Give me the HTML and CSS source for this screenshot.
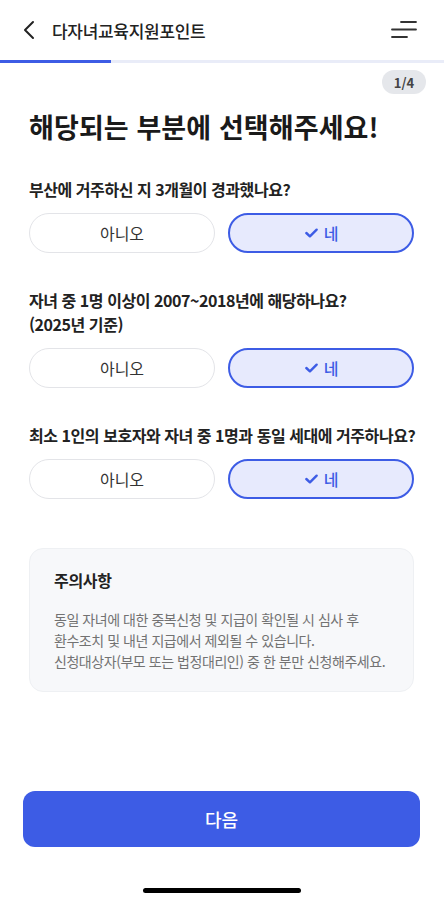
FILE: index.html
```html
<!DOCTYPE html>
<html lang="ko">
<head>
<meta charset="utf-8">
<title>다자녀교육지원포인트</title>
<link rel="stylesheet" href="styles.css">
</head>
<body>
<div class="screen">
  <header class="topbar">
    <button class="icon-btn back" aria-label="뒤로">
      <svg width="14" height="20" viewBox="0 0 14 20"><path d="M11 2 L3 10 L11 18" fill="none" stroke="#222" stroke-width="2" stroke-linecap="round" stroke-linejoin="round"/></svg>
    </button>
    <h1 class="topbar-title">다자녀교육지원포인트</h1>
    <button class="icon-btn menu" aria-label="메뉴">
      <svg width="28" height="20" viewBox="0 0 28 20"><path d="M11 2 H26 M2 9.5 H26 M2 17 H17" fill="none" stroke="#333" stroke-width="1.8" stroke-linecap="round"/></svg>
    </button>
  </header>
  <div class="progress"><div class="progress-fill" style="width:25%"></div></div>

  <main class="content">
    <div class="step-row"><span class="step-badge">1/4</span></div>
    <h2 class="heading">해당되는 부분에 선택해주세요!</h2>

    <section class="question">
      <p class="q-text">부산에 거주하신 지 3개월이 경과했나요?</p>
      <div class="options">
        <button class="opt">아니오</button>
        <button class="opt selected"><svg class="check" width="15" height="12" viewBox="0 0 16 12"><path d="M2.5 6 L6.3 9.5 L13.5 2.5" fill="none" stroke="#3d5ce5" stroke-width="2.6" stroke-linecap="round" stroke-linejoin="round"/></svg>네</button>
      </div>
    </section>

    <section class="question">
      <p class="q-text">자녀 중 1명 이상이 2007~2018년에 해당하나요?<br>(2025년 기준)</p>
      <div class="options">
        <button class="opt">아니오</button>
        <button class="opt selected"><svg class="check" width="15" height="12" viewBox="0 0 16 12"><path d="M2.5 6 L6.3 9.5 L13.5 2.5" fill="none" stroke="#3d5ce5" stroke-width="2.6" stroke-linecap="round" stroke-linejoin="round"/></svg>네</button>
      </div>
    </section>

    <section class="question">
      <p class="q-text">최소 1인의 보호자와 자녀 중 1명과 동일 세대에 거주하나요?</p>
      <div class="options">
        <button class="opt">아니오</button>
        <button class="opt selected"><svg class="check" width="15" height="12" viewBox="0 0 16 12"><path d="M2.5 6 L6.3 9.5 L13.5 2.5" fill="none" stroke="#3d5ce5" stroke-width="2.6" stroke-linecap="round" stroke-linejoin="round"/></svg>네</button>
      </div>
    </section>

    <section class="notice">
      <h3 class="notice-title">주의사항</h3>
      <p class="notice-body">동일 자녀에 대한 중복신청 및 지급이 확인될 시 심사 후<br>환수조치 및 내년 지급에서 제외될 수 있습니다.<br>신청대상자(부모 또는 법정대리인) 중 한 분만 신청해주세요.</p>
    </section>
  </main>

  <footer class="footer">
    <button class="next-btn">다음</button>
    <div class="home-indicator"></div>
  </footer>
</div>
</body>
</html>
```

FILE: styles.css
```css
* { box-sizing: border-box; }
html, body { margin: 0; padding: 0; background: #fff; }
body {
  font-family: "Noto Sans CJK KR", "Noto Sans", sans-serif;
  color: #222;
}
button { font-family: inherit; cursor: pointer; }

.screen {
  width: 444px;
  height: 904px;
  display: flex;
  flex-direction: column;
  overflow: hidden;
}

.topbar {
  height: 60px;
  display: flex;
  align-items: center;
  padding: 0 26px 0 20px;
}
.icon-btn {
  background: none;
  border: 0;
  padding: 0;
  display: flex;
  align-items: center;
  justify-content: center;
}
.back { width: 18px; height: 24px; margin-right: 14px; }
.topbar-title {
  flex: 1;
  margin: 0;
  font-size: 17px;
  font-weight: 500;
  letter-spacing: -0.3px;
  color: #222;
}
.menu { width: 28px; height: 24px; }

.progress {
  height: 3px;
  background: #e9ecf8;
}
.progress-fill {
  height: 100%;
  background: #3d5ce5;
}

.content {
  flex: 1;
  padding: 0 30px 0 29px;
}
.step-row {
  display: flex;
  justify-content: flex-end;
  margin: 7px -12px 0 0;
}
.step-badge {
  display: inline-flex;
  align-items: center;
  justify-content: center;
  width: 44px;
  height: 24px;
  border-radius: 12px;
  background: #e5e7eb;
  color: #444;
  font-size: 13px;
  font-weight: 700;
}
.heading {
  margin: 15px 0 0;
  font-size: 27px;
  line-height: 36px;
  font-weight: 700;
  letter-spacing: 0.1px;
  color: #1a1a1a;
}

.question { margin-top: 32px; }
.question + .question { margin-top: 35px; }
.q-text {
  margin: 0 0 12px;
  font-size: 16px;
  line-height: 24px;
  font-weight: 600;
  letter-spacing: -0.45px;
  white-space: nowrap;
  color: #222;
}
.options {
  display: grid;
  grid-template-columns: 1fr 1fr;
  gap: 13px;
}
.opt {
  height: 40px;
  border-radius: 20px;
  border: 1px solid #e3e4e8;
  background: #fff;
  color: #333;
  font-size: 16px;
  font-weight: 400;
  display: flex;
  align-items: center;
  justify-content: center;
  gap: 5px;
  padding: 0;
}
.opt.selected {
  border: 2px solid #3d5ce5;
  background: #e7eafd;
  color: #3d5ce5;
  font-weight: 500;
}
.check { display: block; }

.notice {
  margin-top: 49px;
  padding: 19px 20px 19px 24px;
  background: #f7f8fa;
  border: 1px solid #eef0f3;
  border-radius: 14px;
}
.notice-title {
  margin: 0 0 17px;
  font-size: 16px;
  line-height: 24px;
  font-weight: 700;
  letter-spacing: -0.3px;
  color: #222;
}
.notice-body {
  margin: 0;
  font-size: 14px;
  line-height: 21px;
  font-weight: 400;
  letter-spacing: -0.45px;
  color: #727272;
}

.footer {
  padding: 0 24px 0 23px;
  display: flex;
  flex-direction: column;
  align-items: center;
}
.next-btn {
  width: 100%;
  height: 56px;
  border: 0;
  border-radius: 12px;
  background: #3d5ce5;
  color: #fff;
  font-size: 18px;
  font-weight: 500;
}
.home-indicator {
  width: 158px;
  height: 5px;
  border-radius: 3px;
  background: #000;
  margin: 41px 0 11px;
}
```
